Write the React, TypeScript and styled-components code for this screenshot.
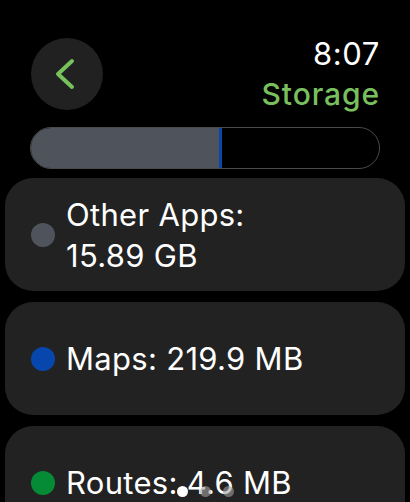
import React from "react";
import styled, { createGlobalStyle } from "styled-components";

const Global = createGlobalStyle`
  html, body { margin: 0; padding: 0; background: #000; }
  body { font-family: Inter, "Noto Sans", sans-serif; color: #fff; overflow: hidden; }
`;

const Screen = styled.div`
  position: relative;
  width: 410px;
  height: 502px;
  overflow: hidden;
  background: #000;
  padding: 0 5px;
  box-sizing: border-box;
`;

const Header = styled.div`
  display: flex;
  justify-content: space-between;
  align-items: flex-start;
  padding: 38px 25px 0 26px;
`;

const BackButton = styled.div`
  width: 72px;
  height: 72px;
  border-radius: 50%;
  background: #212121;
  display: flex;
  align-items: center;
  justify-content: center;
`;

const TitleBlock = styled.div`
  display: flex;
  flex-direction: column;
  align-items: flex-end;
`;

const Time = styled.div`
  font-size: 31px;
  line-height: 32px;
  font-weight: 400;
  color: #fff;
  letter-spacing: 0.6px;
`;

const Title = styled.div`
  font-size: 30px;
  line-height: 48px;
  font-weight: 500;
  color: #79bf5e;
  letter-spacing: 0.9px;
`;

const Track = styled.div`
  margin: 9px 25px 0 25px;
  height: 42px;
  border-radius: 21px;
  border: 1px solid #4a4a4a;
  box-sizing: border-box;
  overflow: hidden;
  display: flex;
  background: #000;
`;

const Segment = styled.div<{ $color: string }>`
  height: 100%;
  background: ${(p) => p.$color};
`;

const List = styled.div`
  display: flex;
  flex-direction: column;
  gap: 11px;
  margin-top: 9px;
`;

const Card = styled.div`
  height: 113px;
  border-radius: 28px;
  background: #222222;
  display: flex;
  align-items: center;
  padding-left: 26px;
  gap: 11px;
  box-sizing: border-box;
`;

const Dot = styled.div<{ $color: string }>`
  width: 24px;
  height: 24px;
  border-radius: 50%;
  background: ${(p) => p.$color};
  flex-shrink: 0;
`;

const Label = styled.div`
  font-size: 31px;
  line-height: 41px;
  font-weight: 400;
  color: #fff;
  letter-spacing: 0.3px;
`;

const Pager = styled.div`
  position: absolute;
  left: 177px;
  top: 486px;
  display: flex;
  gap: 12px;
`;

const PageDot = styled.div<{ $active?: boolean }>`
  width: 11px;
  height: 11px;
  border-radius: 50%;
  background: ${(p) => (p.$active ? "#fff" : "rgba(160,160,160,0.6)")};
`;

const items = [
  { color: "#4f535c", text: ["Other Apps:", "15.89 GB"] },
  { color: "#0747ad", text: ["Maps: 219.9 MB"] },
  { color: "#058a36", text: ["Routes: 4.6 MB"] },
];

export default function App() {
  return (
    <Screen>
      <Global />
      <Header>
        <BackButton>
          <svg width="72" height="72" viewBox="0 0 72 72">
            <polyline
              points="41,23 27,36 41,49"
              fill="none"
              stroke="#76c25b"
              strokeWidth="4"
              strokeLinecap="round"
              strokeLinejoin="round"
            />
          </svg>
        </BackButton>
        <TitleBlock>
          <Time>8:07</Time>
          <Title>Storage</Title>
        </TitleBlock>
      </Header>
      <Track>
        <Segment $color="#4f535c" style={{ width: "188px" }} />
        <Segment $color="#0747ad" style={{ width: "3px" }} />
      </Track>
      <List>
        {items.map((it, i) => (
          <Card key={i}>
            <Dot $color={it.color} />
            <Label>
              {it.text.map((t, j) => (
                <div key={j}>{t}</div>
              ))}
            </Label>
          </Card>
        ))}
      </List>
      <Pager>
        <PageDot $active />
        <PageDot />
        <PageDot />
      </Pager>
    </Screen>
  );
}
